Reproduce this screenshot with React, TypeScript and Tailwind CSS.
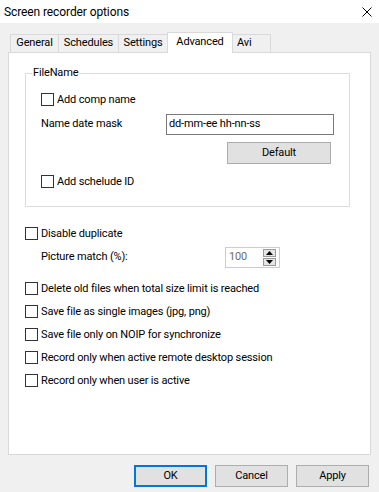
import React from "react";

function Check({ label, className }: { label: string; className?: string }) {
  return (
    <label className={`flex items-center h-[13px] ${className ?? ""}`}>
      <span className="w-[13px] h-[13px] border border-[#333333] bg-white shrink-0" />
      <span className="ml-[3px] leading-none whitespace-nowrap">{label}</span>
    </label>
  );
}

function Tab({ label, w, active, left }: { label: string; w: string; active?: boolean; left?: boolean }) {
  return (
    <div
      className={`${w} -ml-px first:ml-0 flex items-center border-t border-l border-r border-[#d9d9d9] ${
        left ? "justify-start pl-[4px]" : "justify-center"
      } ${active ? "h-[21px] -mb-px bg-white relative z-10 pb-[2px]" : "h-[18px] bg-[#f0f0f0]"}`}
    >
      {label}
    </div>
  );
}

function Btn({ label, primary }: { label: string; primary?: boolean }) {
  return (
    <button
      className={`w-[73px] h-[22px] bg-[#e1e1e1] flex items-center justify-center ${
        primary ? "border-2 border-[#0078d7]" : "border border-[#adadad]"
      }`}
    >
      {label}
    </button>
  );
}

export default function App() {
  return (
    <div className="w-[379px] h-[492px] bg-[#f0f0f0] flex flex-col text-[11px] tracking-[-0.15px] text-black font-['Roboto',sans-serif] overflow-hidden">
      {/* title bar */}
      <div className="h-[23px] bg-white flex items-center justify-between pl-[4px] pr-[7px] shrink-0">
        <span className="text-[12px] tracking-[-0.1px]">Screen recorder options</span>
        <svg width="10" height="10" viewBox="0 0 10 10" className="mt-px">
          <path d="M0.5 0.5 L9.5 9.5 M9.5 0.5 L0.5 9.5" stroke="#000" strokeWidth="1" />
        </svg>
      </div>

      {/* tabs */}
      <div className="mt-[9px] h-[20px] flex items-end pl-[10px] shrink-0">
        <Tab label="General" w="w-[49px]" />
        <Tab label="Schedules" w="w-[61px]" />
        <Tab label="Settings" w="w-[50px]" />
        <Tab label="Advanced" w="w-[66px]" active />
        <Tab label="Avi" w="w-[39px]" left />
      </div>

      {/* panel */}
      <div className="mx-[8px] h-[403px] bg-white border border-[#d9d9d9] flex flex-col pl-[16px] shrink-0">
        <fieldset className="mt-[13px] w-[325px] border border-[#dcdcdc] pl-[15px] pb-[18px] flex flex-col">
          <legend className="-ml-[9px] px-px h-[14px] leading-[14px]">FileName</legend>
          <Check label="Add comp name" className="mt-[13px]" />
          <div className="mt-[8px] h-[21px] flex items-center">
            <span className="w-[125px]">Name date mask</span>
            <div className="w-[168px] h-[21px] border border-[#7a7a7a] flex items-center pl-[2px]">
              dd-mm-ee hh-nn-ss
            </div>
          </div>
          <div className="mt-[7px] ml-[186px] w-[104px] h-[22px] bg-[#e1e1e1] border border-[#adadad] flex items-center justify-center">
            Default
          </div>
          <Check label="Add schelude ID" className="mt-[11px]" />
        </fieldset>

        <Check label="Disable duplicate" className="mt-[20px]" />
        <div className="mt-[7px] h-[21px] flex items-center pl-[16px]">
          <span className="w-[184px]">Picture match (%):</span>
          <div className="w-[55px] h-[21px] border border-[#cccccc] flex items-center justify-between pl-[3px] pr-[3px] text-[#6d6d6d]">
            <span>100</span>
            <div className="flex flex-col gap-px">
              <div className="w-[13px] h-[8px] bg-[#e5e5e5] border border-[#9a9a9a] flex items-center justify-center">
                <svg width="7" height="4" viewBox="0 0 7 4">
                  <path d="M0 4 L3.5 0 L7 4 Z" fill="#000" />
                </svg>
              </div>
              <div className="w-[13px] h-[8px] bg-[#e5e5e5] border border-[#9a9a9a] flex items-center justify-center">
                <svg width="7" height="4" viewBox="0 0 7 4">
                  <path d="M0 0 L3.5 4 L7 0 Z" fill="#000" />
                </svg>
              </div>
            </div>
          </div>
        </div>
        <Check label="Delete old files when total size limit is reached" className="mt-[14px]" />
        <Check label="Save file as single images (jpg, png)" className="mt-[10px]" />
        <Check label="Save file only on NOIP for synchronize" className="mt-[10px]" />
        <Check label="Record only when active remote desktop session" className="mt-[10px]" />
        <Check label="Record only when user is active" className="mt-[10px]" />
      </div>

      {/* buttons */}
      <div className="mt-[10px] h-[22px] flex justify-end gap-[8px] pr-[10px] shrink-0">
        <Btn label="OK" primary />
        <Btn label="Cancel" />
        <Btn label="Apply" />
      </div>
    </div>
  );
}
